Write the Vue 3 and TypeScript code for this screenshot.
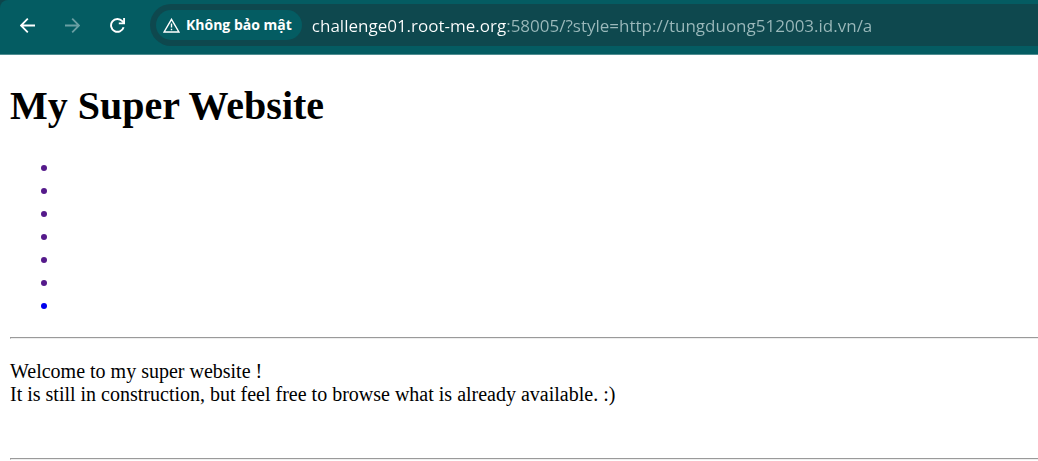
<script setup lang="ts">
import { ref } from 'vue'

interface MenuLink {
  id: number
  visited: boolean
}

const address = ref('challenge01.root-me.org:58005/?style=http://tungduong512003.id.vn/a')

const links: MenuLink[] = Array.from({ length: 7 }, (_, i) => ({ id: i + 1, visited: i < 6 }))
</script>

<template>
  <div class="browser">
    <header class="frame">
      <nav class="toolbar">
        <button class="tool" type="button" aria-label="Back">
          <svg width="15" height="15" viewBox="0 0 15 15" fill="none" stroke="currentColor" stroke-width="1.8">
            <path d="M15 7.5H1.2M7.8 .7L1 7.5l6.8 6.8" />
          </svg>
        </button>
        <button class="tool" type="button" aria-label="Forward" disabled>
          <svg width="15" height="15" viewBox="0 0 15 15" fill="none" stroke="currentColor" stroke-width="1.8">
            <path d="M0 7.5h13.8M7.2 .7L14 7.5l-6.8 6.8" />
          </svg>
        </button>
        <button class="tool" type="button" aria-label="Reload">
          <svg width="15" height="15" viewBox="0 0 15 15" fill="none" stroke="currentColor" stroke-width="1.9">
            <path d="M13.6 9.2A6.4 6.4 0 1 1 12.3 3.2L14 5" />
            <path d="M14.1 0v5.4H8.8" />
          </svg>
        </button>
        <div class="omnibox">
          <button class="security" type="button">
            <svg width="17" height="15" viewBox="0 0 17 15" fill="none" stroke="currentColor" stroke-width="1.4">
              <path d="M8.5 1.3L15.9 14H1.1z" />
              <path d="M8.5 5.6v4M8.5 10.7v1.5" />
            </svg>
            <span>Không bảo mật</span>
          </button>
          <input v-model="address" class="address" type="text" aria-label="Address" spellcheck="false" />
        </div>
      </nav>
    </header>

    <main class="page">
      <h1>My Super Website</h1>
      <ul>
        <li v-for="link in links" :key="link.id" :class="{ visited: link.visited }"></li>
      </ul>
      <hr />
      <p>
        Welcome to my super website !<br />
        It is still in construction, but feel free to browse what is already available. :)
      </p>
      <hr />
    </main>
  </div>
</template>

<style>
body {
  margin: 0;
  background: #fff;
}
</style>

<style scoped>
.browser {
  overflow: hidden;
}

.frame {
  background: #0d454b;
}

.toolbar {
  display: flex;
  align-items: center;
  padding: 4px 0 8px 5px;
  background: #045c62;
  border-bottom: 1px solid #4f8d91;
  border-top-left-radius: 8px;
}

.tool {
  display: flex;
  flex: none;
  align-items: center;
  justify-content: center;
  width: 45px;
  height: 42px;
  padding: 0;
  border: 0;
  background: none;
  color: #fff;
}

.tool:disabled {
  color: #6a9fa3;
}

.omnibox {
  display: flex;
  flex: 1;
  align-items: center;
  gap: 10px;
  min-width: 0;
  height: 42px;
  margin-left: 10px;
  padding-left: 6px;
  border-radius: 21px 0 0 21px;
  background: #0e484e;
}

.security {
  display: flex;
  flex: none;
  align-items: center;
  gap: 6px;
  height: 30px;
  padding: 0 10px 0 7px;
  border: 0;
  border-radius: 15px;
  background: #045c62;
  color: #fff;
  font: 700 14px/20px "Open Sans", "Noto Sans", sans-serif;
  white-space: nowrap;
}

.address {
  flex: 1;
  min-width: 0;
  height: 30px;
  padding: 2px 0 0;
  border: 0;
  outline: 0;
  background: linear-gradient(90deg, #fff 194px, #9bb9bb 194px);
  background-clip: text;
  -webkit-background-clip: text;
  color: transparent;
  caret-color: #fff;
  font: 400 17px/30px "Open Sans", "Noto Sans", sans-serif;
}

.page {
  padding: 28px 0 0 10px;
  color: #000;
  font: 20px/23px "Liberation Serif", "Times New Roman", serif;
}

h1 {
  margin: 0 0 27px;
  font-size: 40px;
  line-height: 46px;
}

ul {
  margin: 0 0 20px;
  padding-left: 50px;
}

li {
  height: 23px;
  color: #0000ee;
}

li.visited {
  color: #551a8b;
}

hr {
  height: 0;
  margin: 0;
  border: 1px solid #9a9a9a;
  border-right: 0;
  border-bottom-color: #eee;
}

p {
  margin: 21px 0 52px;
}
</style>
